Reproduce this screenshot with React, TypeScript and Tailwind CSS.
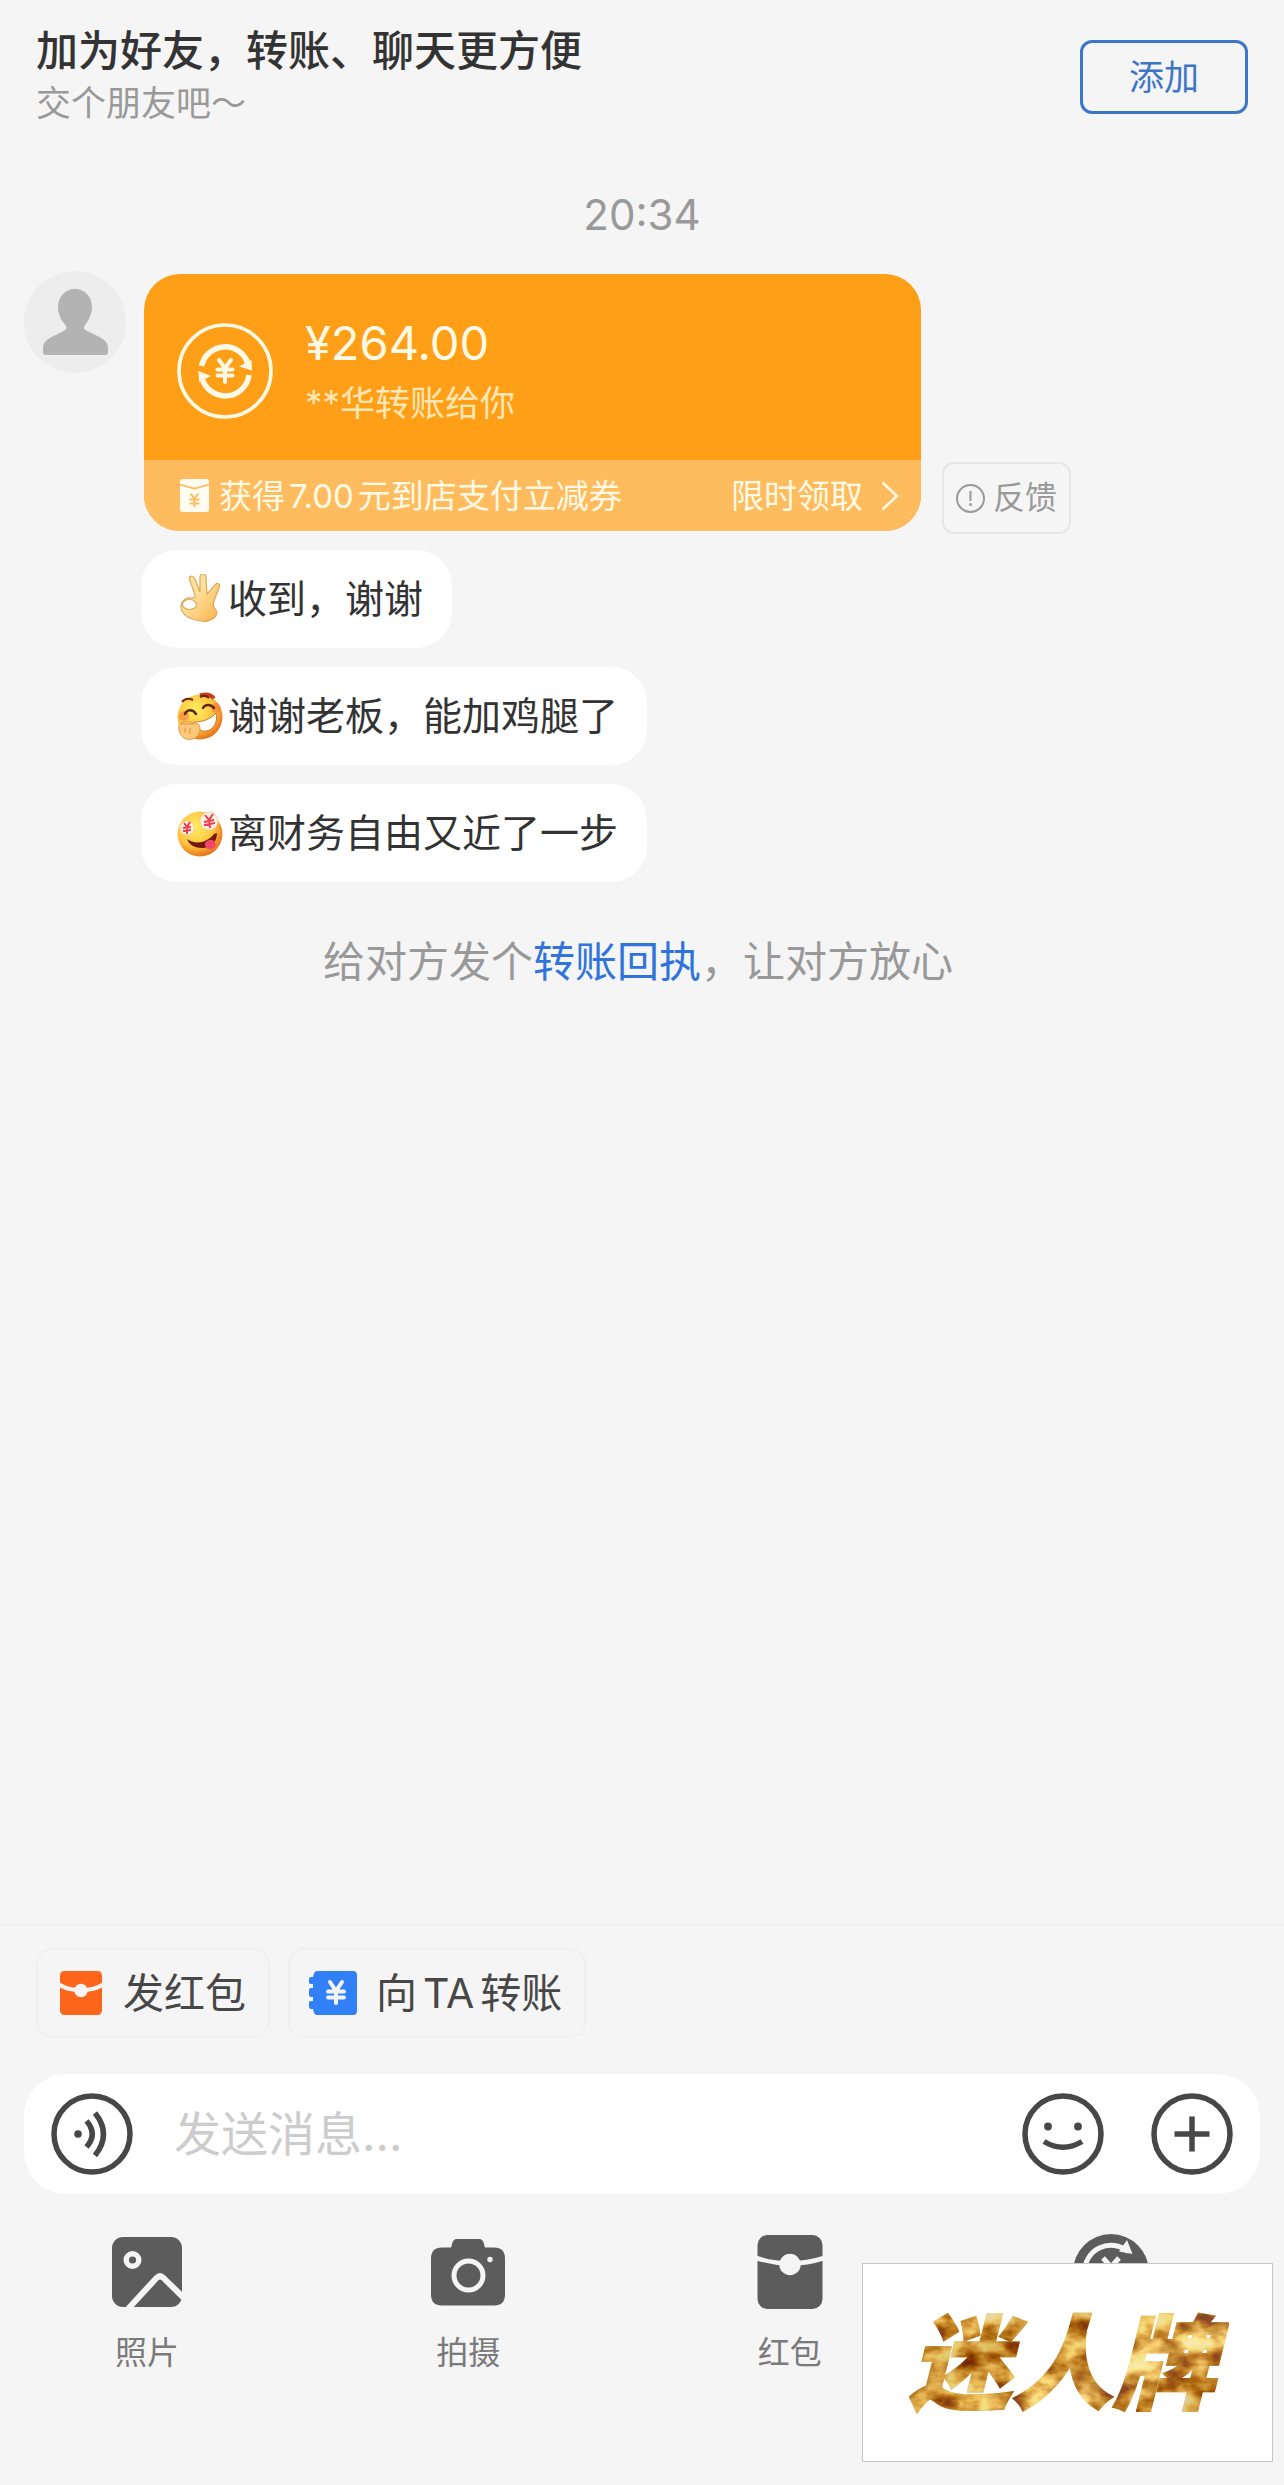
import React, { useState } from 'react';

type IconProps = { className?: string };

function AvatarIcon({ className }: IconProps) {
  return (
    <svg viewBox="0 0 102 102" className={className} aria-hidden="true">
      <circle cx="51" cy="51" r="51" fill="#ededed" />
      <path
        d="M51 18c10 0 17 8 17 18 0 8-4 14-7.500 19-1 1.500-.5 3 1 4C70 64 78 66 82 71c1.500 2 2 4 2 8 0 3 0 5-3 5H22c-3 0-3-2-3-5 0-4 .5-6 2-8 4-5 12-7 20-12 1.500-1 2-2.500 1-4-4-5-8-11-8-19 0-10 7-18 17-18z"
        fill="#b3b3b3"
      />
    </svg>
  );
}

function TransferIcon({ className }: IconProps) {
  return (
    <svg viewBox="0 0 96 96" fill="none" stroke="#fffae6" className={className} aria-hidden="true">
      <circle cx="48" cy="48" r="46" strokeWidth="3.600" />
      <path d="M24.500 43A24 24 0 0 1 71 41" strokeWidth="5.500" />
      <path d="M72 52A24 24 0 0 1 25 55" strokeWidth="5.500" />
      <path d="M62 43.500L75 47.500L74.500 37zM34 53L21.500 48L22 59z" fill="#fffae6" stroke="none" />
      <path d="M42 37l6 8 6-8M48 45v14M40.500 46.500h15M40.500 52.500h15" strokeWidth="4" strokeLinecap="round" />
    </svg>
  );
}

function CouponIcon({ className }: IconProps) {
  return (
    <svg viewBox="0 0 29 33" fill="none" className={className} aria-hidden="true">
      <rect width="29" height="33" rx="3" fill="#fffdf2" />
      <g stroke="#ffbc5e">
        <path d="M0 5.500L14.500 9.500L29 5.500" strokeWidth="1.800" />
        <path d="M10.500 14.500l4 5 4-5M14.500 19.500v8.500M9.500 20.500h10M9.500 24.500h10" strokeWidth="2" />
      </g>
    </svg>
  );
}

function OkHand({ className }: IconProps) {
  return (
    <svg viewBox="-3 0 48 50" className={className} aria-hidden="true">
      <defs>
        <linearGradient id="hand" x1="0" y1="0" x2="1" y2="1">
          <stop offset="0.400" stopColor="#ffe19b" />
          <stop offset="1" stopColor="#f9b04a" />
        </linearGradient>
      </defs>
      <path
        d="M10 4c1-3 5-2 6 1l5 13V3c0-4 6-4 6 0l1 17 8-9c2-3 6-1 4 3l-5 13c-1 4-1 6 2 9 2 3 0 6-2 8-4 3-8 4-13 3-7-1-19-4-20-14 0-6 5-10 10-9 3 0 5 0 4-3z"
        fill="url(#hand)"
        stroke="#dba95c"
        strokeWidth="1.200"
      />
      <ellipse cx="10.500" cy="30.500" rx="7" ry="5" fill="#fff" stroke="#dba95c" strokeWidth="1.200" />
    </svg>
  );
}

function GiggleFace({ className }: IconProps) {
  return (
    <svg viewBox="0 0 48 50" fill="none" className={className} aria-hidden="true">
      <defs>
        <radialGradient id="face" cx="0.400" cy="0.350" r="0.650">
          <stop offset="0" stopColor="#ffee62" />
          <stop offset="0.650" stopColor="#fdc33e" />
          <stop offset="1" stopColor="#e9761c" />
        </radialGradient>
      </defs>
      <circle cx="24" cy="26" r="22.500" fill="url(#face)" />
      <circle cx="40" cy="17" r="5" fill="#f66b42" opacity="0.500" />
      <circle cx="8" cy="25" r="5" fill="#f66b42" opacity="0.500" />
      <path d="M24 4.500c6-2 11-1 14 3" stroke="#c2401c" strokeWidth="4" />
      <path d="M6 11c3-4 7-4 11-2M24 6c4-2 7-1 9 1" stroke="#70260c" strokeWidth="2" />
      <path d="M9 23c2-5 8-5 11 0M27 17c2-4 8-4 11 0" stroke="#5c2c12" strokeWidth="2.500" strokeLinecap="round" />
      <path d="M18 31c9 0 17-3 22-9 2 9-2 16-9 18-5 1-10-2-13-9z" fill="#fff" stroke="#c77a2c" />
      <path d="M3 34c2-3 7-4 11-3l8 2c3 1 2 8 0 11-2 4-9 6-14 3-4-3-6-8-5-13z" fill="#fcc87a" stroke="#e79a43" />
      <path d="M5 33h13M9 37v5M14 37v6" stroke="#e0913d" />
    </svg>
  );
}

function RichFace({ className }: IconProps) {
  return (
    <svg viewBox="0 0 48 50" fill="none" className={className} aria-hidden="true">
      <circle cx="24" cy="26" r="22.500" fill="url(#face)" />
      <circle cx="11" cy="20" r="7" fill="#fff1e2" stroke="#f8cfa0" />
      <circle cx="33" cy="13" r="9" fill="#fff1e2" stroke="#f8cfa0" />
      <path d="M8 15l3 4 3-5M11 19v7M7 20l8-1M7 23l8-1M29 7l4 5 4-6M33 12l1 8M28 14l10-2M28 17l11-2" stroke="#ee4051" strokeWidth="2" />
      <path d="M11 31c8 6 20 4 27-5l3-1c0 10-7 15-15 15-7 0-13-3-15-9z" fill="#76170b" />
      <path d="M29 35c3-4 8-4 10-1 2 4-2 8-6 7-3 0-4-3-4-6z" fill="#f2476b" />
    </svg>
  );
}

function PacketChipIcon({ className }: IconProps) {
  return (
    <svg viewBox="0 0 42 44" fill="none" className={className} aria-hidden="true">
      <rect width="42" height="44" rx="4.500" fill="#fd651b" />
      <path d="M-1 13.500C10 21 32 21 43 13.500" stroke="#f5f5f5" strokeWidth="4" />
      <circle cx="21" cy="19.500" r="6.700" fill="#f5f5f5" />
    </svg>
  );
}

function LedgerIcon({ className }: IconProps) {
  return (
    <svg viewBox="0 0 48 44" fill="none" className={className} aria-hidden="true">
      <path
        d="M8 0H44Q48 0 48 4V40Q48 44 44 44H8Q5 44 4 38H2Q0 38 0 36V31Q0 30 4 30V26H2Q0 26 0 24V19Q0 17 2 17H4V13Q0 13 0 12V8Q0 6 2 6H4Q5 0 8 0z"
        fill="#3180f8"
      />
      <path d="M21 11l6 9 6-9M27 20v12M19 20.500h16M19 26.500h16" stroke="#f5f5f5" strokeWidth="4" strokeLinecap="round" />
    </svg>
  );
}

function VoiceIcon({ className }: IconProps) {
  return (
    <svg viewBox="0 0 82 82" fill="none" stroke="#474747" strokeWidth="5.500" className={className} aria-hidden="true">
      <circle cx="41" cy="41" r="38" />
      <circle cx="27" cy="41" r="3.800" fill="#474747" stroke="none" />
      <path d="M35.500 28Q47 41 35.500 54M44 20Q61 41 44 62.500" />
    </svg>
  );
}

function SmileIcon({ className }: IconProps) {
  return (
    <svg viewBox="0 0 82 82" fill="none" stroke="#474747" strokeWidth="5.500" className={className} aria-hidden="true">
      <circle cx="41" cy="41" r="38" />
      <circle cx="26" cy="33.500" r="3.900" fill="#474747" stroke="none" />
      <circle cx="56" cy="33.500" r="3.900" fill="#474747" stroke="none" />
      <path d="M22 48.500Q41 60 60 48.500" />
    </svg>
  );
}

function PlusIcon({ className }: IconProps) {
  return (
    <svg viewBox="0 0 82 82" fill="none" stroke="#474747" strokeWidth="5.500" className={className} aria-hidden="true">
      <circle cx="41" cy="41" r="38" />
      <path d="M41 23.500v35M23.500 41h35" />
    </svg>
  );
}

function PhotoIcon({ className }: IconProps) {
  return (
    <svg viewBox="0 0 76 76" fill="none" className={className} aria-hidden="true">
      <rect x="3" y="3" width="70" height="70" rx="11" fill="#5c5c5c" />
      <g stroke="#f5f5f5">
        <circle cx="23.500" cy="26" r="6.300" strokeWidth="5.400" />
        <path d="M18 76L47.500 44Q51 40.500 54.500 44L76 65" strokeWidth="6" />
      </g>
    </svg>
  );
}

function CameraIcon({ className }: IconProps) {
  return (
    <svg viewBox="0 0 76 76" fill="none" className={className} aria-hidden="true">
      <path
        d="M27 5h22q4 0 5 5 .5 3 1 3.500h9q11 0 11 11v36q0 11-11 11H12q-11 0-11-11v-36q0-11 11-11h9q.5-.5 1-3.500 1-5 5-5z"
        fill="#5c5c5c"
      />
      <circle cx="38.500" cy="41.500" r="14.500" stroke="#f5f5f5" strokeWidth="5" />
      <circle cx="60" cy="25.500" r="2.700" fill="#f5f5f5" />
    </svg>
  );
}

function PacketIcon({ className }: IconProps) {
  return (
    <svg viewBox="0 0 76 76" fill="none" className={className} aria-hidden="true">
      <rect x="5.500" y="1" width="65" height="74" rx="10" fill="#5c5c5c" />
      <path d="M4 24Q38 35 72 24" stroke="#f5f5f5" strokeWidth="4.500" />
      <circle cx="38" cy="30.500" r="10.700" fill="#f5f5f5" />
    </svg>
  );
}

function TransferToolIcon({ className }: IconProps) {
  return (
    <svg viewBox="0 0 76 76" fill="none" className={className} aria-hidden="true">
      <circle cx="38" cy="38" r="38" fill="#5c5c5c" />
      <g stroke="#f5f5f5" strokeWidth="5">
        <path d="M11.500 38A26.500 26.500 0 0 1 55 17.500" />
        <path d="M64.500 38A26.500 26.500 0 0 1 21 58.500" />
        <path d="M30 24l8 9 8-9M38 33v20M29 36h18M29 44h18" />
      </g>
      <path d="M54 6L59.500 20L46 17.500zM22 70L16.500 56L30 58.500z" fill="#f5f5f5" />
    </svg>
  );
}

function BrandBadge() {
  return (
    <div className="absolute right-[11px] bottom-[23px] z-10 w-[411px] border border-[#c8c8c8] bg-white">
      <svg viewBox="0 0 409 197" className="block w-full" role="img" aria-label="迷人牌">
        <defs>
          <linearGradient id="gold" x1="0" y1="0" x2="1" y2="1">
            <stop offset="0" stopColor="#a86c0c" />
            <stop offset="0.200" stopColor="#dfa93a" />
            <stop offset="0.350" stopColor="#a86a0a" />
            <stop offset="0.500" stopColor="#dca83c" />
            <stop offset="0.650" stopColor="#eec873" />
            <stop offset="0.800" stopColor="#bd7f18" />
            <stop offset="1" stopColor="#7d4a04" />
          </linearGradient>
          <filter id="foil" x="0" y="0" width="1" height="1" colorInterpolationFilters="sRGB">
            <feTurbulence type="fractalNoise" baseFrequency="0.030 0.045" numOctaves="4" seed="8" result="noise" />
            <feColorMatrix
              in="noise"
              values="1.800 0 0 0 -0.070  2.300 0 0 0 -0.550  2.200 0 0 0 -0.850  0 0 0 0 0.600"
              result="tint"
            />
            <feComposite in="tint" in2="SourceAlpha" operator="in" result="grain" />
            <feMerge>
              <feMergeNode in="SourceGraphic" />
              <feMergeNode in="grain" />
            </feMerge>
          </filter>
        </defs>
        <text
          x="199"
          y="137"
          textAnchor="middle"
          fill="url(#gold)"
          stroke="url(#gold)"
          strokeWidth="2"
          filter="url(#foil)"
          className="font-['Noto_Sans_CJK_SC',sans-serif] text-[102px] font-black italic"
        >
          迷人牌
        </text>
      </svg>
    </div>
  );
}

const replies = [
  { icon: OkHand, text: '收到，谢谢' },
  { icon: GiggleFace, text: '谢谢老板，能加鸡腿了' },
  { icon: RichFace, text: '离财务自由又近了一步' },
];

const tools = [
  { icon: PhotoIcon, label: '照片' },
  { icon: CameraIcon, label: '拍摄' },
  { icon: PacketIcon, label: '红包' },
];

export default function App() {
  const [message, setMessage] = useState('');

  return (
    <div className="relative flex min-h-screen flex-col overflow-hidden bg-[#f5f5f5] font-['Inter','Noto_Sans_CJK_SC',sans-serif] text-[#333]">
      {/* Add friend banner */}
      <header className="flex items-center justify-between px-9 pt-[27px]">
        <div>
          <h1 className="text-[42px] leading-[48px] font-medium">加为好友，转账、聊天更方便</h1>
          <p className="mt-1 text-[35px] leading-[48px] text-[#999]">交个朋友吧～</p>
        </div>
        <button
          type="button"
          className="h-[74px] w-[168px] rounded-xl border-3 border-[#3d76c9] text-[35px] leading-[48px] text-[#3d76c9]"
        >
          添加
        </button>
      </header>

      {/* Conversation */}
      <main className="flex-1 pt-16">
        <time className="block text-center text-[42px] leading-[48px] text-[#999]">20:34</time>

        <div className="mt-8 flex pl-6">
          <AvatarIcon className="size-[102px] shrink-0" />
          <div className="ml-[18px] w-full max-w-[777px] py-[3px]">
            <div className="overflow-hidden rounded-[36px] bg-[#ff9f18] text-[#fffae6]">
              <div className="flex h-[186px] items-center gap-8 px-[33px] pt-2">
                <TransferIcon className="size-24 shrink-0" />
                <div>
                  <p className="text-[47px] leading-[64px]">¥264.00</p>
                  <p className="text-[35px] leading-[56px] text-[#ffe6b5]">**华转账给你</p>
                </div>
              </div>
              <button
                type="button"
                className="flex h-[71px] w-full items-center bg-[#ffbc5e] pr-[22px] pl-9 text-[33px] leading-[48px] text-[#fffae6]"
              >
                <CouponIcon className="mr-[10px] h-[33px] w-[29px]" />
                <span className="flex gap-1">
                  <span>获得</span>
                  <span>7.00</span>
                  <span>元到店支付立减券</span>
                </span>
                <span className="ml-auto">限时领取</span>
                <svg viewBox="0 0 18 30" fill="none" stroke="#fffae6" strokeWidth="2.500" className="ml-[18px] h-[30px] w-[18px]" aria-hidden="true">
                  <path d="M1.500 1.500L16 15L1.500 28.500" />
                </svg>
              </button>
            </div>
          </div>
          <button
            type="button"
            className="ml-[21px] flex h-[72px] w-[129px] shrink-0 items-center justify-center gap-2 self-end rounded-xl border-2 border-[#e6e6e6] text-[32px] leading-[48px] text-[#999]"
          >
            <svg viewBox="0 0 29 29" fill="none" stroke="#999" strokeWidth="2" className="size-[29px]" aria-hidden="true">
              <circle cx="14.500" cy="14.500" r="13.500" />
              <path d="M14.500 7v10" />
              <circle cx="14.500" cy="20.500" r="0.600" />
            </svg>
            反馈
          </button>
        </div>

        {/* Quick replies */}
        <div className="mt-4 flex flex-col items-start gap-[19px] pl-[141px]">
          {replies.map(({ icon: Icon, text }) => (
            <button
              key={text}
              type="button"
              className="flex h-[98px] items-center gap-1 rounded-[36px] bg-white pr-[29px] pl-[35px] text-[39px] leading-[48px]"
            >
              <Icon className="h-[50px] w-12" />
              {text}
            </button>
          ))}
        </div>

        <p className="mt-[56px] pr-2 text-center text-[42px] leading-[48px] text-[#999]">
          给对方发个
          <a href="#receipt" className="text-[#2f74dc]">
            转账回执
          </a>
          ，让对方放心
        </p>
      </main>

      <footer className="border-t-2 border-[#f0f0f0] pt-[22px] pb-[108px]">
        <div className="flex gap-[18px] px-9 text-[41px] leading-[48px] text-[#474747]">
          <button type="button" className="flex h-[90px] items-center rounded-2xl border-2 border-[#f0f0f0] px-[22px]">
            <PacketChipIcon className="mr-[21px] h-11 w-[42px]" />
            发红包
          </button>
          <button type="button" className="flex h-[90px] items-center rounded-2xl border-2 border-[#f0f0f0] pr-[22px] pl-[19px]">
            <LedgerIcon className="mr-[19px] h-11 w-12" />
            <span className="flex gap-[6px]">
              <span>向</span>
              <span>TA</span>
              <span>转账</span>
            </span>
          </button>
        </div>

        {/* Message input */}
        <form
          onSubmit={(e) => e.preventDefault()}
          className="mx-6 mt-9 flex h-[120px] items-center rounded-[42px] bg-white px-[27px]"
        >
          <button type="button" aria-label="语音">
            <VoiceIcon className="size-[82px]" />
          </button>
          <input
            type="text"
            aria-label="发送消息"
            value={message}
            onChange={(e) => setMessage(e.target.value)}
            placeholder="发送消息..."
            className="ml-[41px] min-w-0 flex-1 text-[47px] leading-[64px] outline-none placeholder:text-[#ccc]"
          />
          <button type="button" aria-label="表情">
            <SmileIcon className="size-[82px]" />
          </button>
          <button type="button" aria-label="更多" className="ml-[47px]">
            <PlusIcon className="size-[82px]" />
          </button>
        </form>

        <div className="mt-10 flex items-start justify-between pr-[109px] pl-[83px]">
          {tools.map(({ icon: Icon, label }) => (
            <button key={label} type="button" className="flex w-32 flex-col items-center text-[32px] leading-[48px] text-[#7a7a7a]">
              <Icon className="size-[76px]" />
              <span className="mt-[19px]">{label}</span>
            </button>
          ))}
          <button type="button" aria-label="转账" className="flex w-32 justify-center">
            <TransferToolIcon className="size-[76px]" />
          </button>
        </div>
      </footer>

      <BrandBadge />
    </div>
  );
}
